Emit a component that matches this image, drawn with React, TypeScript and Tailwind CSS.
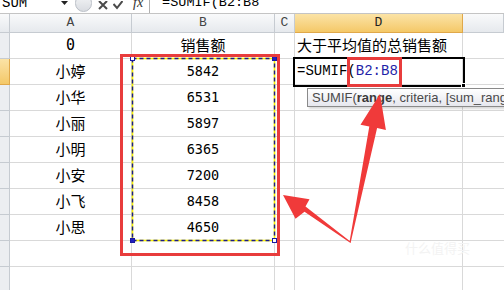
import React from "react";

const CJK = "font-['Noto_Sans_CJK_SC',sans-serif]";
const MONO = "font-['Liberation_Mono',monospace]";
const NUM = "font-['DejaVu_Sans_Mono',monospace]";

const rows: [string, string][] = [
  ["0", "销售额"],
  ["小婷", "5842"],
  ["小华", "6531"],
  ["小丽", "5897"],
  ["小明", "6365"],
  ["小安", "7200"],
  ["小飞", "8458"],
  ["小思", "4650"],
  ["", ""],
  ["", ""],
];

function HeaderCell({ label, active }: { label: string; active?: boolean }) {
  return (
    <div
      className={
        active
          ? `flex items-center justify-center border-r border-b border-[#e0a84a] bg-gradient-to-b from-[#fbe3a6] to-[#f4c867] text-[13px] text-[#222] ${MONO}`
          : `flex items-center justify-center border-r border-b border-[#c6cbd1] bg-gradient-to-b from-[#f9fafb] to-[#e6e9ed] text-[13px] text-[#444] ${MONO}`
      }
    >
      {label}
    </div>
  );
}

export default function App() {
  return (
    <div className="relative h-[290px] w-[504px] overflow-hidden bg-white">
      {/* formula bar (cut at the top) */}
      <div className="flex h-[14px] items-start overflow-hidden border-b border-[#c4c4c4] bg-white">
        <div className="flex w-[72px] items-start">
          <span className={`-mt-[4px] pl-[2px] text-[14px] leading-[14px] text-black ${MONO}`}>SUM</span>
          <svg className="ml-auto mr-[4px] mt-[1px]" width="7" height="4" viewBox="0 0 7 4">
            <polygon points="0,0 7,0 3.5,4" fill="#222" />
          </svg>
        </div>
        <div className="-mt-[6px] ml-[3px] h-[18px] w-[17px] rounded-full border border-[#b9bec6] bg-gradient-to-b from-[#f4f5f7] to-[#d9dce1]" />
        <div className="ml-[6px] flex items-start gap-[5px] pt-[1px]">
          <svg width="10" height="9" viewBox="0 0 10 9">
            <path d="M1 0 L9 8 M9 0 L1 8" stroke="#4a4a4a" strokeWidth="2" />
          </svg>
          <svg width="10" height="9" viewBox="0 0 10 9">
            <path d="M0.5 3 L4 7 L9.5 0" stroke="#4a4a4a" strokeWidth="2" fill="none" />
          </svg>
        </div>
        <span className="-mt-[4px] ml-[10px] font-['Liberation_Serif',serif] text-[14px] italic leading-[14px] text-[#333]">
          fx
        </span>
        <div className="ml-[6px] h-[13px] w-px bg-[#b0b0b0]" />
        <span className={`-mt-[4px] ml-[12px] text-[13.5px] leading-[14px] text-black ${MONO}`}>=SUMIF(B2:B8</span>
      </div>

      {/* sheet grid */}
      <div className="grid grid-cols-[10px_122px_143px_20px_168px_41px] grid-rows-[19px_repeat(10,26px)]">
        <div className="border-r border-b border-[#c6cbd1] bg-gradient-to-b from-[#f9fafb] to-[#e6e9ed]" />
        <HeaderCell label="A" />
        <HeaderCell label="B" />
        <HeaderCell label="C" />
        <HeaderCell label="D" active />
        <HeaderCell label="" />
        {rows.map((r, i) => (
          <React.Fragment key={i}>
            <div
              className={
                i === 1
                  ? "border-r border-b border-[#e0a84a] bg-gradient-to-b from-[#fbe3a6] to-[#f4c867]"
                  : "border-r border-b border-[#c6cbd1] bg-[#eceef1]"
              }
            />
            <div
              className={`flex items-center justify-center border-r border-b border-[#d9d9d9] text-[15px] text-black ${
                i === 0 ? `${NUM} text-[14px]` : CJK
              }`}
            >
              {r[0]}
            </div>
            <div
              className={`flex items-center justify-center border-r border-b border-[#d9d9d9] text-black ${
                i === 0 ? `${CJK} text-[15px]` : `${NUM} text-[13.5px]`
              }`}
            >
              {r[1]}
            </div>
            <div className="border-r border-b border-[#d9d9d9]" />
            <div className="flex items-center overflow-hidden whitespace-nowrap border-r border-b border-[#d9d9d9] pl-[2px]">
              {i === 0 && <span className={`text-[15px] text-black ${CJK}`}>大于平均值的总销售额</span>}
              {i === 1 && (
                <span className={`text-[14px] text-black ${MONO}`}>
                  =SUMIF(<span className="text-[#1f1fa8]">B2:B8</span>
                </span>
              )}
            </div>
            <div className="border-b border-[#d9d9d9]" />
          </React.Fragment>
        ))}
      </div>

      {/* active cell border */}
      <div className="absolute left-[293px] top-[57px] h-[30px] w-[172px] border-2 border-black" />
      <div className="absolute left-[461px] top-[83px] h-[5px] w-[5px] border border-white bg-black" />

      {/* marching ants selection */}
      <svg className="absolute left-0 top-0" width="504" height="290" viewBox="0 0 504 290">
        <rect x="132.5" y="58.5" width="142" height="182" fill="none" stroke="#f6f000" strokeWidth="1.6" />
        <rect x="132.5" y="58.5" width="142" height="182" fill="none" stroke="#1a1a8c" strokeWidth="1.4" strokeDasharray="4 3" />
        <rect x="130.5" y="56.5" width="4" height="4" fill="#fff" stroke="#1a1aa0" />
        <rect x="272.5" y="56.5" width="4" height="4" fill="#2020c0" stroke="#1a1aa0" />
        <rect x="130.5" y="238.5" width="4" height="4" fill="#2020c0" stroke="#1a1aa0" />
        <rect x="272.5" y="238.5" width="4" height="4" fill="#fff" stroke="#1a1aa0" />
      </svg>

      {/* tooltip */}
      <div className="absolute left-[307px] top-[88px] flex h-[19px] items-center whitespace-nowrap border border-[#8a8a8a] bg-gradient-to-b from-white to-[#e6e7ee] pl-[4px] pr-[40px] font-['Liberation_Sans',sans-serif] text-[13px] text-[#4a4a4a] shadow-[2px_2px_2px_rgba(0,0,0,0.15)]">
        SUMIF(<b className="text-[#3a3a3a]">range</b>, criteria, [sum_range])
      </div>

      {/* red annotation boxes */}
      <div className="absolute left-[120px] top-[54px] h-[202px] w-[160px] border-[3px] border-[#e83c3c]" />
      <div className="absolute left-[347px] top-[57px] h-[30px] w-[55px] border-[3px] border-[#e83c3c]" />

      {/* arrows */}
      <svg className="absolute left-0 top-0" width="504" height="290" viewBox="0 0 504 290">
        <polygon
          points="349.5,242 369.3,126.5 360.5,124.7 380,94 385.9,129.9 377.1,128.1 350.8,242"
          fill="#f03a3a"
        />
        <polygon
          points="350.5,243 304.5,211.8 295.5,218.8 283,195 309.5,199.2 305.5,206.6 351,242"
          fill="#f03a3a"
        />
      </svg>

      {/* faint watermark */}
      <div className="absolute left-[405px] top-[238px] font-['Noto_Sans_CJK_SC',sans-serif] text-[13px] text-[#f3f3f3]">
        什么值得买
      </div>
    </div>
  );
}
